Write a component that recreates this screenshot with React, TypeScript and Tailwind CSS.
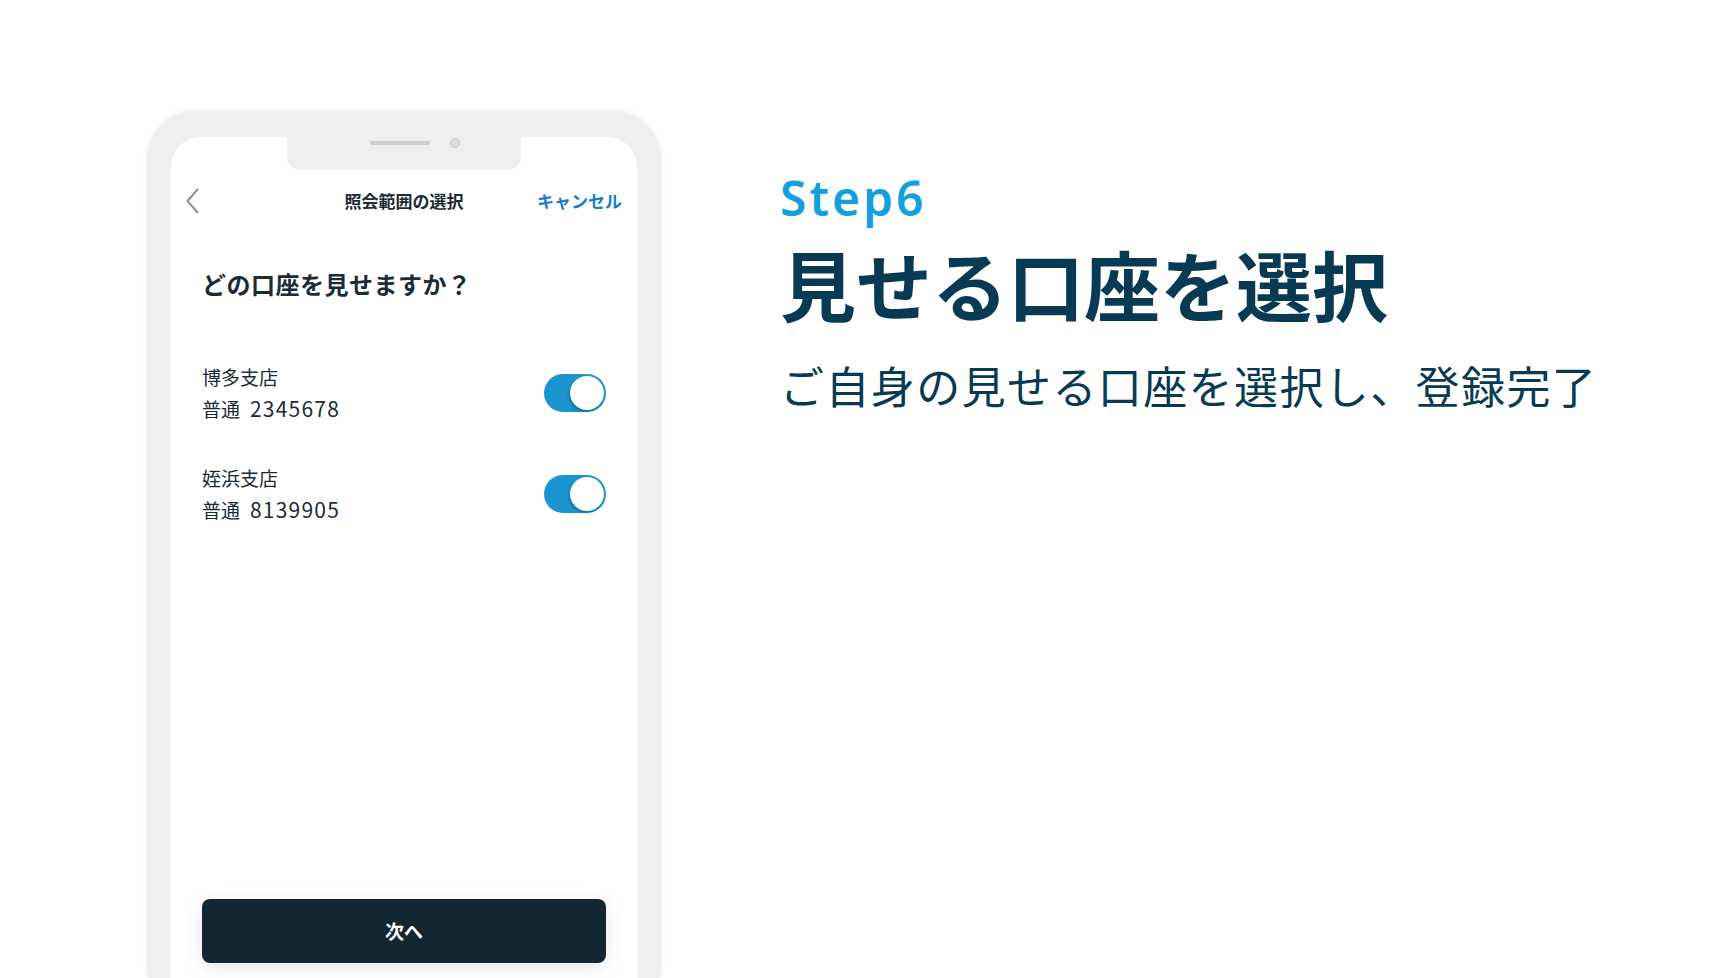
const jp = "font-['Noto_Sans_CJK_JP',sans-serif]";

const accounts = [
  { branch: "博多支店", type: "普通", number: "2345678" },
  { branch: "姪浜支店", type: "普通", number: "8139905" },
];

function Toggle() {
  return (
    <div className="flex h-[38px] w-[62px] shrink-0 items-center justify-end rounded-full bg-[#1b95d0] pr-[2px]">
      <div className="h-[34px] w-[34px] rounded-full bg-white shadow-[-1px_2px_3px_rgba(0,0,0,0.25)]" />
    </div>
  );
}

function Phone() {
  return (
    <div className="h-[900px] w-[512px] shrink-0 rounded-[46px] bg-[#efefef] px-[23px] pt-[25px] shadow-[0_0_5px_rgba(0,0,0,0.12)]">
      <div className="relative h-full rounded-[30px] bg-white">
        {/* notch */}
        <div className="absolute left-1/2 top-0 h-[33px] w-[234px] -translate-x-1/2 rounded-b-[14px] bg-[#efefef]">
          <div className="absolute left-[83px] top-[4px] h-[4px] w-[60px] rounded-full bg-[#cdcdcd]" />
          <div className="absolute left-[163px] top-[1px] h-[10px] w-[10px] rounded-full border border-[#c4c4c4] bg-[#dcdcdc]" />
        </div>

        <div className={`${jp} pt-[48px]`}>
          <div className="grid h-[32px] grid-cols-[1fr_auto_1fr] items-center px-[15px]">
            <svg width="13" height="26" viewBox="0 0 13 26" className="justify-self-start">
              <polyline points="12,1 1.5,13 12,25" fill="none" stroke="#8e8e93" strokeWidth="2" />
            </svg>
            <p className="text-[17px] font-bold text-[#1c2b36]">照会範囲の選択</p>
            <p className="justify-self-end text-[17px] font-bold text-[#1a7dc4]">キャンセル</p>
          </div>

          <div className="px-[31px]">
            <h2 className="mt-[51px] text-[24px] font-bold leading-[32px] tracking-[0.5px] text-[#1c2b36]">
              どの口座を見せますか？
            </h2>

            <div className="mt-[61px] space-y-[37px]">
              {accounts.map((a) => (
                <div key={a.number} className="flex items-center justify-between">
                  <div className="text-[19px] leading-[32px] text-[#1c2b36]">
                    <p className="h-[32px]">{a.branch}</p>
                    <p className="h-[32px]">
                      {a.type}
                      <span className="ml-[10px] text-[21px] leading-none tracking-[1.2px]">{a.number}</span>
                    </p>
                  </div>
                  <Toggle />
                </div>
              ))}
            </div>

            <button className="mt-[373px] flex h-[64px] w-full items-center justify-center rounded-[8px] bg-[#132733] text-[19px] font-bold text-white shadow-[0_4px_18px_rgba(0,0,0,0.1)]">
              次へ
            </button>
          </div>
        </div>
      </div>
    </div>
  );
}

export default function App() {
  return (
    <div className="flex h-[978px] w-[1718px] items-start overflow-hidden bg-white pl-[148px] pt-[112px]">
      <Phone />
      <div className="ml-[120px] mt-[62px]">
        <p className="font-['Noto_Sans',sans-serif] text-[48px] font-semibold leading-none tracking-[3px] text-[#14a0e0]">
          Step6
        </p>
        <h1 className={`${jp} mt-[23px] text-[76px] font-bold leading-none text-[#083a54]`}>
          見せる口座を選択
        </h1>
        <p className={`${jp} mt-[42px] text-[44px] font-normal leading-none tracking-[1.4px] text-[#083a54]`}>
          ご自身の見せる口座を選択し、登録完了
        </p>
      </div>
    </div>
  );
}
